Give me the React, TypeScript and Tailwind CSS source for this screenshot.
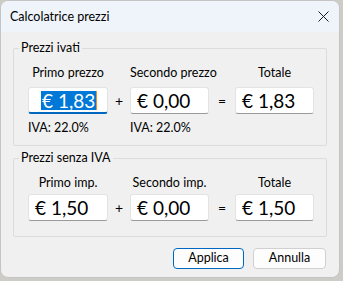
import React from "react";

const font = { fontFamily: 'Lato, "Noto Sans", sans-serif' };

function Box({ value, focused, pl = "pl-[6px]" }: { value: string; focused?: boolean; pl?: string }) {
  return (
    <div
      className={`h-[27px] bg-white flex items-center ${pl} border border-[#e3e3e3] ${
        focused ? "border-b-2 border-b-[#0067c0]" : "border-b-[#9a9a9a]"
      } rounded-[3px] text-[19px] leading-none text-black whitespace-nowrap`}
    >
      {focused ? (
        <span className="flex items-center">
          <span className="bg-[#0078d7] text-white px-[1px] h-[19px] flex items-center">{value}</span>
          <span className="w-[1px] h-[19px] bg-[#f08a24]" />
        </span>
      ) : (
        <span>{value}</span>
      )}
    </div>
  );
}

function Group({
  title,
  labels,
  values,
  iva,
  className,
}: {
  title: string;
  labels: [string, string, string];
  values: [string, string, string];
  iva: boolean;
  className: string;
}) {
  return (
    <div className={`relative border border-[#dcdcdc] rounded-[2px] pl-[14px] ${className}`}>
      <span className="absolute left-[5px] -top-[9px] px-[2px] bg-[#f0f0f0] text-[12.5px] leading-[16px] text-black whitespace-nowrap">
        {title}
      </span>
      <div className="grid grid-cols-[80px_22px_79px_26px_79px] h-[16px] text-[12.5px] leading-[16px] text-black whitespace-nowrap">
        <div className="text-center">{labels[0]}</div>
        <div />
        <div className="text-center">{labels[1]}</div>
        <div />
        <div className="text-center">{labels[2]}</div>
      </div>
      <div
        className={`grid grid-cols-[80px_22px_79px_26px_79px] items-center ${iva ? "mt-[6px]" : "mt-[3px]"}`}
      >
        <Box value={values[0]} focused={iva} pl={iva ? "pl-[12px]" : "pl-[6px]"} />
        <div className="text-center text-[14px]">+</div>
        <Box value={values[1]} />
        <div className="text-center text-[14px]">=</div>
        <Box value={values[2]} />
      </div>
      {iva && (
        <div className="grid grid-cols-[80px_22px_79px_26px_79px] h-[16px] mt-[6px] text-[12.5px] leading-[16px] text-black whitespace-nowrap">
          <div>IVA: 22.0%</div>
          <div />
          <div>IVA: 22.0%</div>
        </div>
      )}
    </div>
  );
}

export default function App() {
  return (
    <div className="w-[343px] h-[281px] bg-[#cdccc6] overflow-hidden" style={font}>
      <div className="w-[340px] h-[278px] rounded-[8px] border border-[#c4c4c4] overflow-hidden flex flex-col bg-[#f0f0f0]">
        <div className="h-[31px] bg-[#eef4f9] flex items-center justify-between pl-[9px] pr-[9px] shrink-0">
          <span className="text-[12.5px] leading-[16px] text-black">Calcolatrice prezzi</span>
          <svg width="11" height="11" viewBox="0 0 11 11" className="mr-[1px]">
            <path d="M0.5 0.5 L10.5 10.5 M10.5 0.5 L0.5 10.5" stroke="#1a1a1a" strokeWidth="1" />
          </svg>
        </div>
        <div className="flex-1 flex flex-col px-[12px] pt-[16px]">
          <Group
            title="Prezzi ivati"
            labels={["Primo prezzo", "Secondo prezzo", "Totale"]}
            values={["€ 1,83", "€ 0,00", "€ 1,83"]}
            iva={true}
            className="pt-[16px] pb-[9px]"
          />
          <Group
            title="Prezzi senza IVA"
            labels={["Primo imp.", "Secondo imp.", "Totale"]}
            values={["€ 1,50", "€ 0,00", "€ 1,50"]}
            iva={false}
            className="mt-[12px] pt-[16px] pb-[15px]"
          />
          <div className="flex justify-end gap-[9px] mt-[11px] pr-[1px]">
            <button className="w-[71px] h-[21px] rounded-[4px] border border-[#0067c0] bg-[#fdfdfd] text-[12.5px] leading-none text-black">
              Applica
            </button>
            <button className="w-[73px] h-[21px] rounded-[4px] border border-[#d0d0d0] bg-[#fdfdfd] text-[12.5px] leading-none text-black">
              Annulla
            </button>
          </div>
        </div>
      </div>
    </div>
  );
}
